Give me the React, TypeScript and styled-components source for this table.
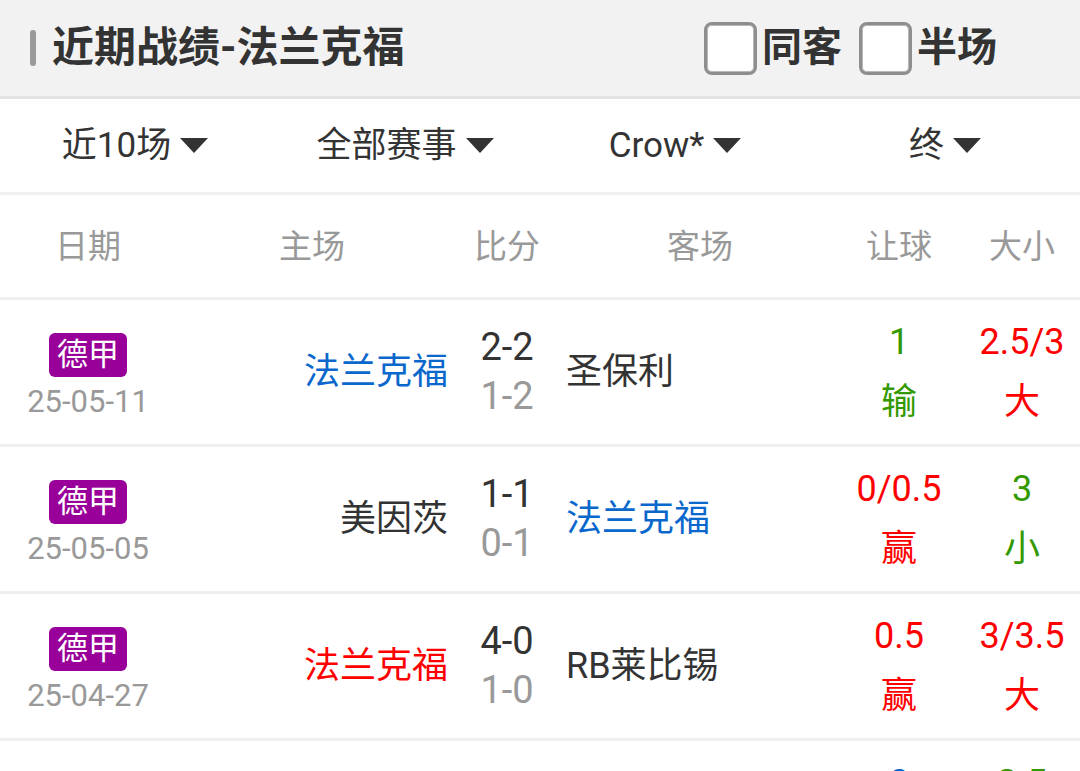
import React from "react";
import styled, { createGlobalStyle } from "styled-components";

const Global = createGlobalStyle`
  html, body { margin: 0; padding: 0; background: #fff; }
  body { font-family: Roboto, "Noto Sans CJK SC", sans-serif; color: #333; }
  * { box-sizing: border-box; }
`;

const Page = styled.div`
  width: 1080px;
  background: #fff;
`;

const TitleBar = styled.div`
  height: 99px;
  background: #f2f2f2;
  border-bottom: 3px solid #e3e3e3;
  display: flex;
  align-items: center;
  padding: 0 83px 0 30px;
`;

const Accent = styled.span`
  width: 6px;
  height: 36px;
  border-radius: 3px;
  background: #9a9a9a;
  margin-right: 16px;
`;

const Title = styled.h1`
  margin: 0;
  font-size: 42px;
  font-weight: 700;
  color: #333;
  line-height: 1;
  flex: 1;
`;

const Toggles = styled.div`
  display: flex;
  align-items: center;
  gap: 17px;
`;

const Toggle = styled.label`
  display: flex;
  align-items: center;
  gap: 5px;
  font-size: 40px;
  font-weight: 700;
  color: #333;
  line-height: 1;
`;

const Box = styled.span`
  width: 53px;
  height: 53px;
  border: 3px solid #8e8e8e;
  border-radius: 8px;
  background: #fff;
  box-shadow: inset 0 0 0 1px #b8b8b8;
`;

const FilterRow = styled.div`
  height: 96px;
  display: grid;
  grid-template-columns: repeat(4, 1fr);
  align-items: center;
  border-bottom: 3px solid #f0f0f0;
`;

const Filter = styled.div`
  display: flex;
  justify-content: center;
  align-items: center;
  gap: 9px;
  font-size: 35px;
  color: #333;
  line-height: 1;
`;

const Caret = styled.span`
  width: 0;
  height: 0;
  border-left: 14px solid transparent;
  border-right: 14px solid transparent;
  border-top: 15px solid #333;
`;

const cols = "176px 272px 118px 268px 130px 116px";

const HeadRow = styled.div`
  height: 105px;
  display: grid;
  grid-template-columns: ${cols};
  align-items: center;
  border-bottom: 3px solid #efefef;
`;

const HeadCell = styled.div`
  text-align: center;
  font-size: 33px;
  color: #999;
  line-height: 1;
`;

const Row = styled.div`
  height: 147px;
  display: grid;
  grid-template-columns: ${cols};
  align-items: center;
  border-bottom: 3px solid #efefef;
`;

const DateCell = styled.div`
  display: flex;
  flex-direction: column;
  align-items: center;
  gap: 7px;
  margin-top: 8px;
`;

const Badge = styled.span`
  background: #990099;
  color: #fff;
  font-size: 31px;
  line-height: 44px;
  height: 44px;
  padding: 0 8px;
  border-radius: 6px;
`;

const DateText = styled.span`
  font-size: 31px;
  color: #999;
  line-height: 36px;
`;

const Team = styled.div<{ $align: "left" | "right"; $color: string }>`
  text-align: ${(p) => p.$align};
  font-size: 36px;
  color: ${(p) => p.$color};
  line-height: 1;
  white-space: nowrap;
`;

const Score = styled.div`
  display: flex;
  flex-direction: column;
  align-items: center;
  font-size: 38px;
  line-height: 49px;
`;

const ScoreLine = styled.span<{ $muted?: boolean }>`
  color: ${(p) => (p.$muted ? "#999" : "#333")};
`;

const Odds = styled.div<{ $color: string }>`
  display: flex;
  flex-direction: column;
  align-items: center;
  font-size: 36px;
  line-height: 60px;
  color: ${(p) => p.$color};
`;

const BLUE = "#0a68cc";
const RED = "#ff0000";
const GREEN = "#339900";
const DARK = "#333";

type Match = {
  date: string;
  home: string;
  homeColor: string;
  full: string;
  half: string;
  away: string;
  awayColor: string;
  hc: string;
  hcRes: string;
  hcColor: string;
  ou: string;
  ouRes: string;
  ouColor: string;
};

const matches: Match[] = [
  { date: "25-05-11", home: "法兰克福", homeColor: BLUE, full: "2-2", half: "1-2", away: "圣保利", awayColor: DARK, hc: "1", hcRes: "输", hcColor: GREEN, ou: "2.5/3", ouRes: "大", ouColor: RED },
  { date: "25-05-05", home: "美因茨", homeColor: DARK, full: "1-1", half: "0-1", away: "法兰克福", awayColor: BLUE, hc: "0/0.5", hcRes: "赢", hcColor: RED, ou: "3", ouRes: "小", ouColor: GREEN },
  { date: "25-04-27", home: "法兰克福", homeColor: RED, full: "4-0", half: "1-0", away: "RB莱比锡", awayColor: DARK, hc: "0.5", hcRes: "赢", hcColor: RED, ou: "3/3.5", ouRes: "大", ouColor: RED },
  { date: "25-04-19", home: "海登海姆", homeColor: DARK, full: "1-1", half: "0-0", away: "法兰克福", awayColor: BLUE, hc: "0", hcRes: "走", hcColor: BLUE, ou: "2.5", ouRes: "小", ouColor: GREEN },
];

export default function App() {
  return (
    <Page>
      <Global />
      <TitleBar>
        <Accent />
        <Title>近期战绩-法兰克福</Title>
        <Toggles>
          <Toggle>
            <Box />
            同客
          </Toggle>
          <Toggle>
            <Box />
            半场
          </Toggle>
        </Toggles>
      </TitleBar>
      <FilterRow>
        {["近10场", "全部赛事", "Crow*", "终"].map((f) => (
          <Filter key={f}>
            {f}
            <Caret />
          </Filter>
        ))}
      </FilterRow>
      <HeadRow>
        {["日期", "主场", "比分", "客场", "让球", "大小"].map((h) => (
          <HeadCell key={h}>{h}</HeadCell>
        ))}
      </HeadRow>
      {matches.map((m) => (
        <Row key={m.date}>
          <DateCell>
            <Badge>德甲</Badge>
            <DateText>{m.date}</DateText>
          </DateCell>
          <Team $align="right" $color={m.homeColor}>{m.home}</Team>
          <Score>
            <ScoreLine>{m.full}</ScoreLine>
            <ScoreLine $muted>{m.half}</ScoreLine>
          </Score>
          <Team $align="left" $color={m.awayColor}>{m.away}</Team>
          <Odds $color={m.hcColor}>
            <span>{m.hc}</span>
            <span>{m.hcRes}</span>
          </Odds>
          <Odds $color={m.ouColor}>
            <span>{m.ou}</span>
            <span>{m.ouRes}</span>
          </Odds>
        </Row>
      ))}
    </Page>
  );
}
